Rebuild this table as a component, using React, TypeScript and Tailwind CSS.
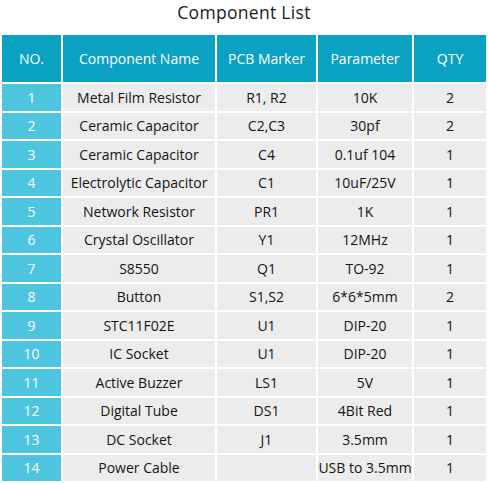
import React from 'react';

const rows: [string, string, string, string, string][] = [
  ['1', 'Metal Film Resistor', 'R1, R2', '10K', '2'],
  ['2', 'Ceramic Capacitor', 'C2,C3', '30pf', '2'],
  ['3', 'Ceramic Capacitor', 'C4', '0.1uf 104', '1'],
  ['4', 'Electrolytic Capacitor', 'C1', '10uF/25V', '1'],
  ['5', 'Network Resistor', 'PR1', '1K', '1'],
  ['6', 'Crystal Oscillator', 'Y1', '12MHz', '1'],
  ['7', 'S8550', 'Q1', 'TO-92', '1'],
  ['8', 'Button', 'S1,S2', '6*6*5mm', '2'],
  ['9', 'STC11F02E', 'U1', 'DIP-20', '1'],
  ['10', 'IC Socket', 'U1', 'DIP-20', '1'],
  ['11', 'Active Buzzer', 'LS1', '5V', '1'],
  ['12', 'Digital Tube', 'DS1', '4Bit Red', '1'],
  ['13', 'DC Socket', 'J1', '3.5mm', '1'],
  ['14', 'Power Cable', '', 'USB to 3.5mm', '1'],
];

const headers = ['NO.', 'Component Name', 'PCB Marker', 'Parameter', 'QTY'];

function App() {
  return (
    <div className="w-[488px] h-[483px] bg-white overflow-hidden" style={{ fontFamily: '"Open Sans", "Noto Sans", sans-serif' }}>
      <h1 className="pt-[1px] h-[23px] text-center text-[17.5px] leading-[22px] font-medium text-[#1a1a1a] tracking-[0.3px]">
        Component List
      </h1>
      <div className="mt-[12px] ml-[2px] grid grid-cols-[59px_152px_99px_94px_72px] grid-rows-[47px] auto-rows-[26.5px] gap-[2px] text-[14px]">
        {headers.map((h) => (
          <div key={h} className="bg-[#0ba1c3] text-white font-medium flex items-center justify-center">
            {h}
          </div>
        ))}
        {rows.map((r) => (
          <React.Fragment key={r[0]}>
            <div className="bg-[#4dc5de] text-white font-medium flex items-center justify-center">{r[0]}</div>
            {r.slice(1).map((c, i) => (
              <div key={i} className="bg-[#ececec] text-[#141414] flex items-center justify-center whitespace-nowrap">
                {c}
              </div>
            ))}
          </React.Fragment>
        ))}
      </div>
    </div>
  );
}

export default App;
